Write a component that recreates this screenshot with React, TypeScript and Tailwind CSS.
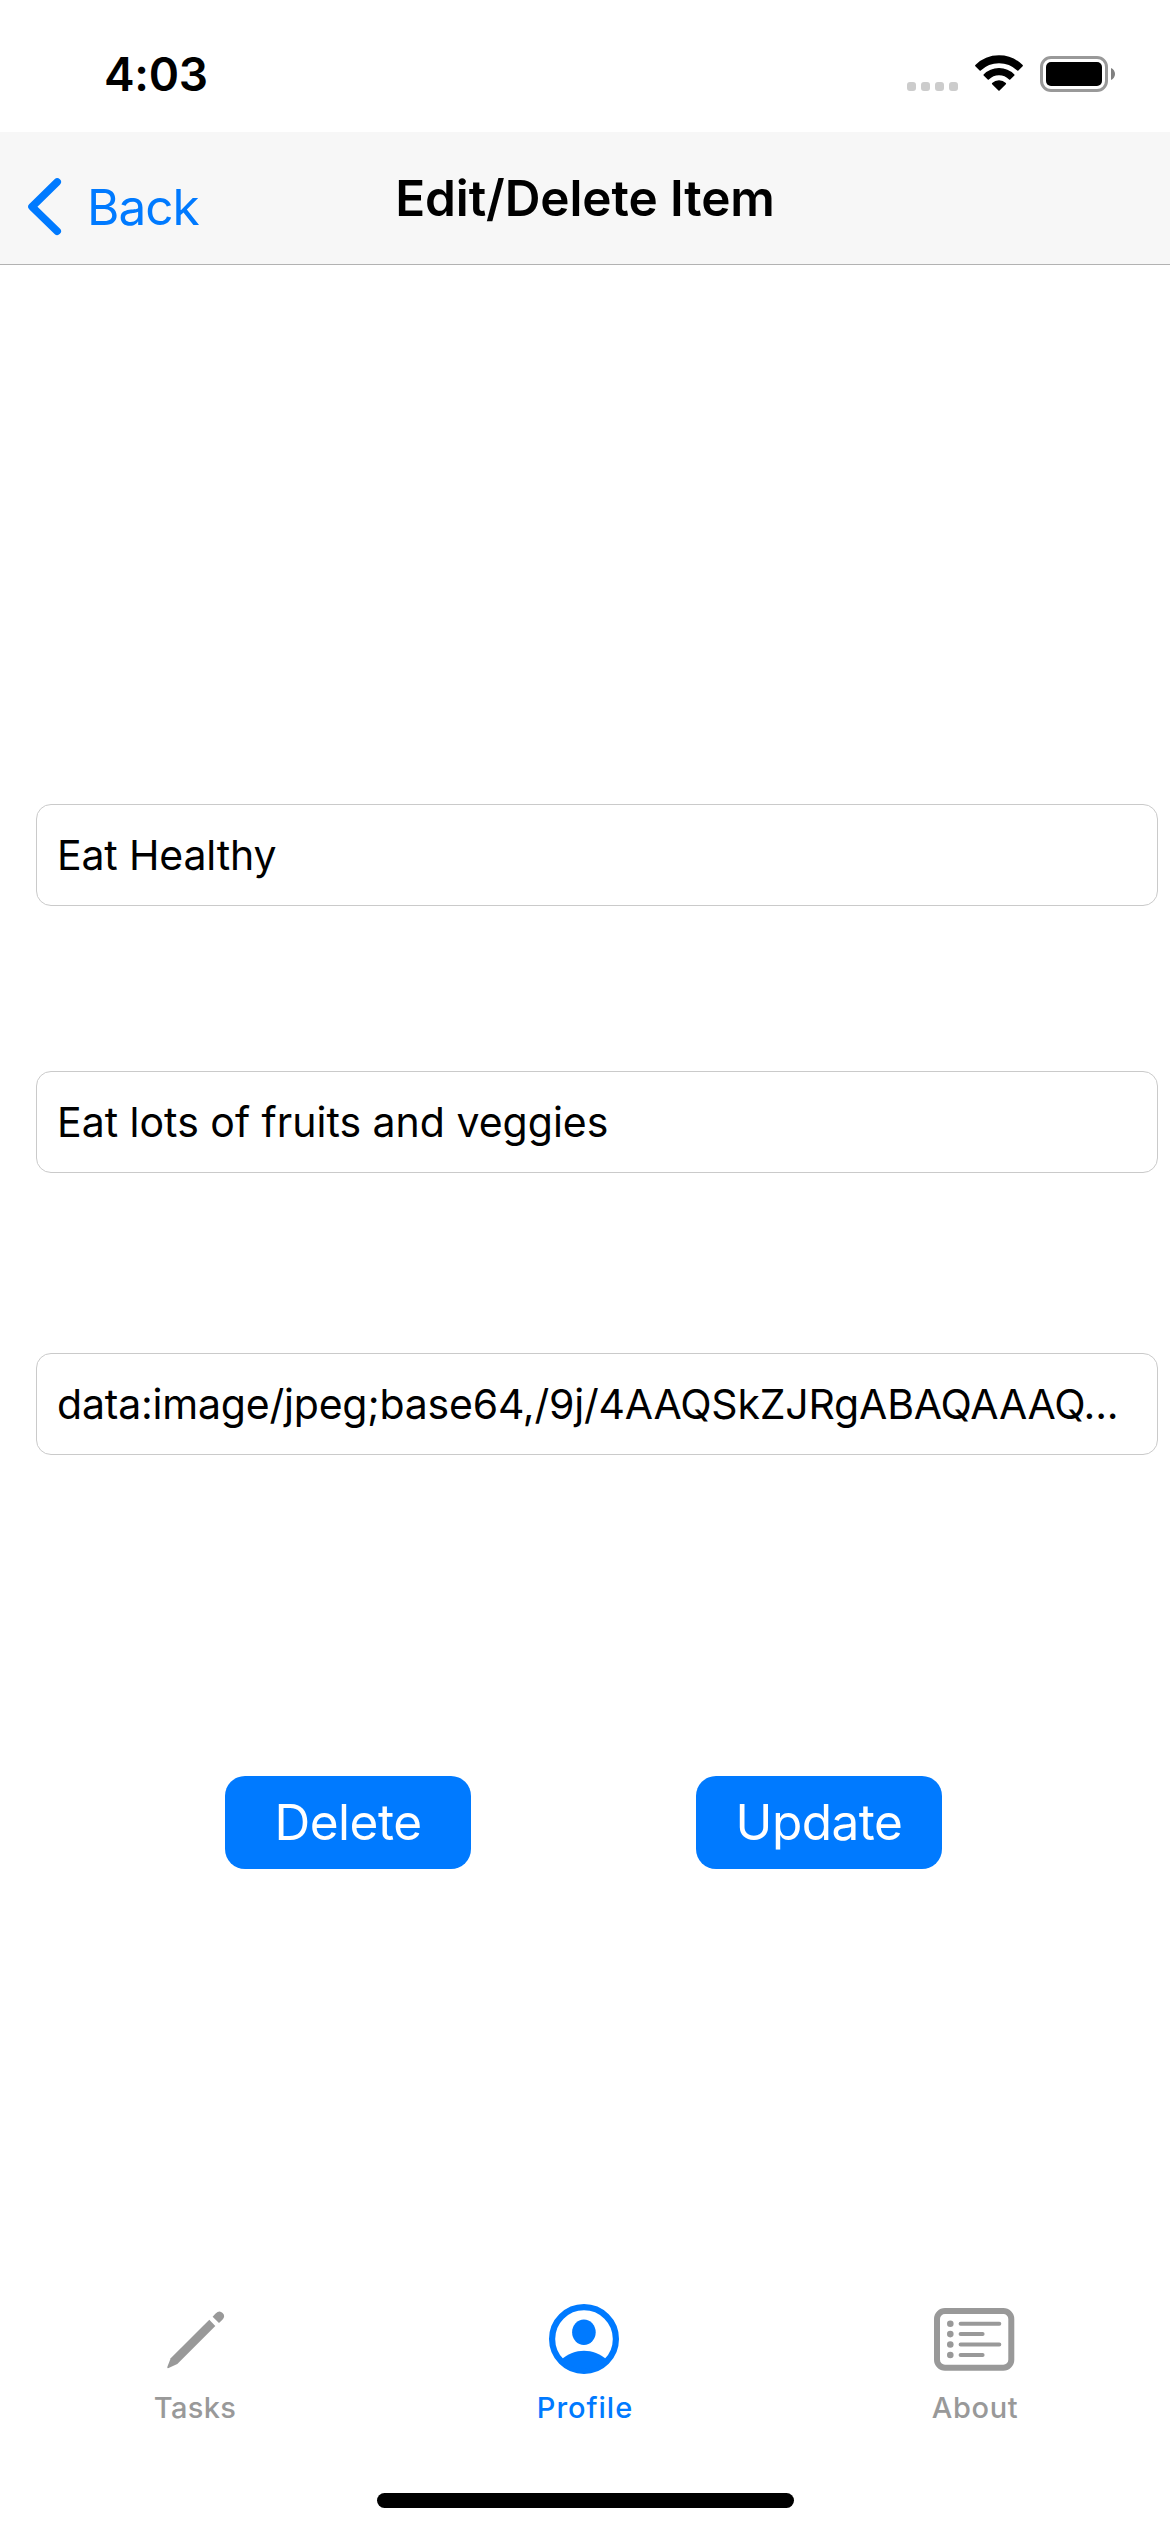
import type { ReactNode } from "react";

function StatusBar() {
  return (
    <div className="flex h-[132px] items-start justify-between pl-[104px] pr-[54px]">
      <span className="mt-[44px] text-[46px] font-semibold leading-[60px] tracking-[-0.3px]">4:03</span>
      <div className="mt-[50px] flex">
        <div className="mr-[15px] mt-[32px] flex gap-[5px]">
          {[0, 1, 2, 3].map((dot) => (
            <span key={dot} className="size-[9px] rounded-[3px] bg-[#cccccc]" />
          ))}
        </div>
        <svg width="52" height="44" viewBox="0 0 52 44" className="mr-[15px]" fill="#000" stroke="#000" strokeWidth="1.6" strokeLinejoin="round">
          <path d="M2.9 15.6 A32.9 32.9 0 0 1 49.1 15.6 L44.8 19.9 A27.3 27.3 0 0 0 7.2 19.9 Z" />
          <path d="M11.2 25 A20.6 20.6 0 0 1 40.8 25 L36.7 29 A15 15 0 0 0 15.3 29 Z" />
          <path d="M19.7 33.6 A9 9 0 0 1 32.3 33.6 L26 39.9 Z" />
        </svg>
        <svg width="76" height="44" viewBox="0 0 76 44">
          <rect x="1.5" y="7.5" width="65" height="33" rx="9.5" fill="none" stroke="#999999" strokeWidth="3" />
          <rect x="6" y="12" width="56" height="24" rx="5" fill="#000" />
          <path d="M71 18 C73.6 19.2 75 21.5 75 24 C75 26.5 73.6 28.8 71 30 Z" fill="#808080" />
        </svg>
      </div>
    </div>
  );
}

function Header() {
  return (
    <header className="grid h-[133px] grid-cols-[1fr_auto_1fr] items-center border-b border-[#b2b2b2] bg-[#f7f7f7]">
      <button className="mt-[18px] flex items-center pl-[24px] text-[#007aff]">
        <svg width="42" height="66" viewBox="0 0 42 66" className="mr-[21px]" fill="none" stroke="currentColor" strokeWidth="7.6" strokeLinecap="round" strokeLinejoin="round">
          <path d="M33.2 8 L8 32.7 L33.2 57.2" />
        </svg>
        <span className="text-[49.5px] leading-[60px] tracking-[-0.95px]">Back</span>
      </button>
      <h1 className="text-[49.5px] font-semibold leading-[60px] tracking-[-0.11px]">Edit/Delete Item</h1>
    </header>
  );
}

function Field({ children }: { children: ReactNode }) {
  return (
    <div className="ml-[36px] mr-[12px] flex h-[102px] items-center overflow-hidden whitespace-nowrap rounded-[15px] border border-[#cacaca] pl-[20px] text-[41px] leading-[50px]">
      {children}
    </div>
  );
}

function Action({ children }: { children: ReactNode }) {
  return (
    <button className="flex h-[93px] w-[246px] items-center justify-center rounded-[20px] bg-[#007aff] text-[49.5px] leading-[61px] tracking-[-0.5px] text-white">
      {children}
    </button>
  );
}

function Tab({ label, children, className }: { label: string; children: ReactNode; className: string }) {
  return (
    <button className={`flex flex-1 flex-col items-center ${className}`}>
      <svg width="100" height="80" viewBox="0 0 100 80">
        {children}
      </svg>
      <span className="mt-[10px] text-[29px] font-medium leading-[35px]">{label}</span>
    </button>
  );
}

export default function App() {
  return (
    <div className="flex h-[2532px] w-[1170px] flex-col bg-white font-['Inter',sans-serif] text-black">
      <StatusBar />
      <Header />
      <main className="flex flex-1 flex-col pt-[539px]">
        <Field>
          <span className="tracking-[-0.15px]">Eat Healthy</span>
        </Field>
        <div className="h-[165px]" />
        <Field>Eat lots of fruits and veggies</Field>
        <div className="h-[180px]" />
        <Field>
          <span className="tracking-[-0.203px]">data:image/jpeg;base64,/9j/4AAQSkZJRgABAQAAAQ...</span>
        </Field>
        <div className="mt-[321px] flex gap-[225px] pl-[225px]">
          <Action>Delete</Action>
          <Action>Update</Action>
        </div>
      </main>
      <nav className="flex h-[193px]">
        <Tab label="Tasks" className="tracking-[0.35px] text-[#999999]">
          <path d="M64.3 19.7 L70.3 25.9 L32.3 64 L23.6 68 Q21.8 68.6 22.4 66.8 L25.7 58.3 Z" fill="currentColor" />
          <path d="M67.6 16.7 L70.6 13.5 Q74.5 9.9 77.6 13.1 Q80.8 16.2 77.4 19.8 L74 23 Z" fill="currentColor" />
        </Tab>
        <Tab label="Profile" className="tracking-[0.97px] text-[#007aff]">
          <circle cx="49" cy="39" r="31.9" fill="none" stroke="currentColor" strokeWidth="6.2" />
          <ellipse cx="48.9" cy="32.3" rx="11.8" ry="12.7" fill="currentColor" />
          <path d="M26.5 59.5 C39 47.8 59 47.8 71.5 59.5 A32 32 0 0 1 26.5 59.5 Z" fill="currentColor" />
        </Tab>
        <Tab label="About" className="tracking-[0.64px] text-[#999999]">
          <rect x="12" y="11" width="74.3" height="56.7" rx="8" fill="none" stroke="currentColor" strokeWidth="6" />
          <g fill="currentColor">
            <circle cx="25.3" cy="23.8" r="3.3" />
            <circle cx="25.3" cy="34.1" r="3.3" />
            <circle cx="25.3" cy="44.5" r="3.3" />
            <circle cx="25.3" cy="55" r="3.3" />
          </g>
          <path d="M35.6 23.8 H74.3 M35.6 34.1 H57.6 M35.6 44.5 H74.3 M35.6 55 H57.6" stroke="currentColor" strokeWidth="4" strokeLinecap="round" />
        </Tab>
      </nav>
      <div className="mb-[24px] h-[15px] w-[417px] self-center rounded-full bg-black" />
    </div>
  );
}
